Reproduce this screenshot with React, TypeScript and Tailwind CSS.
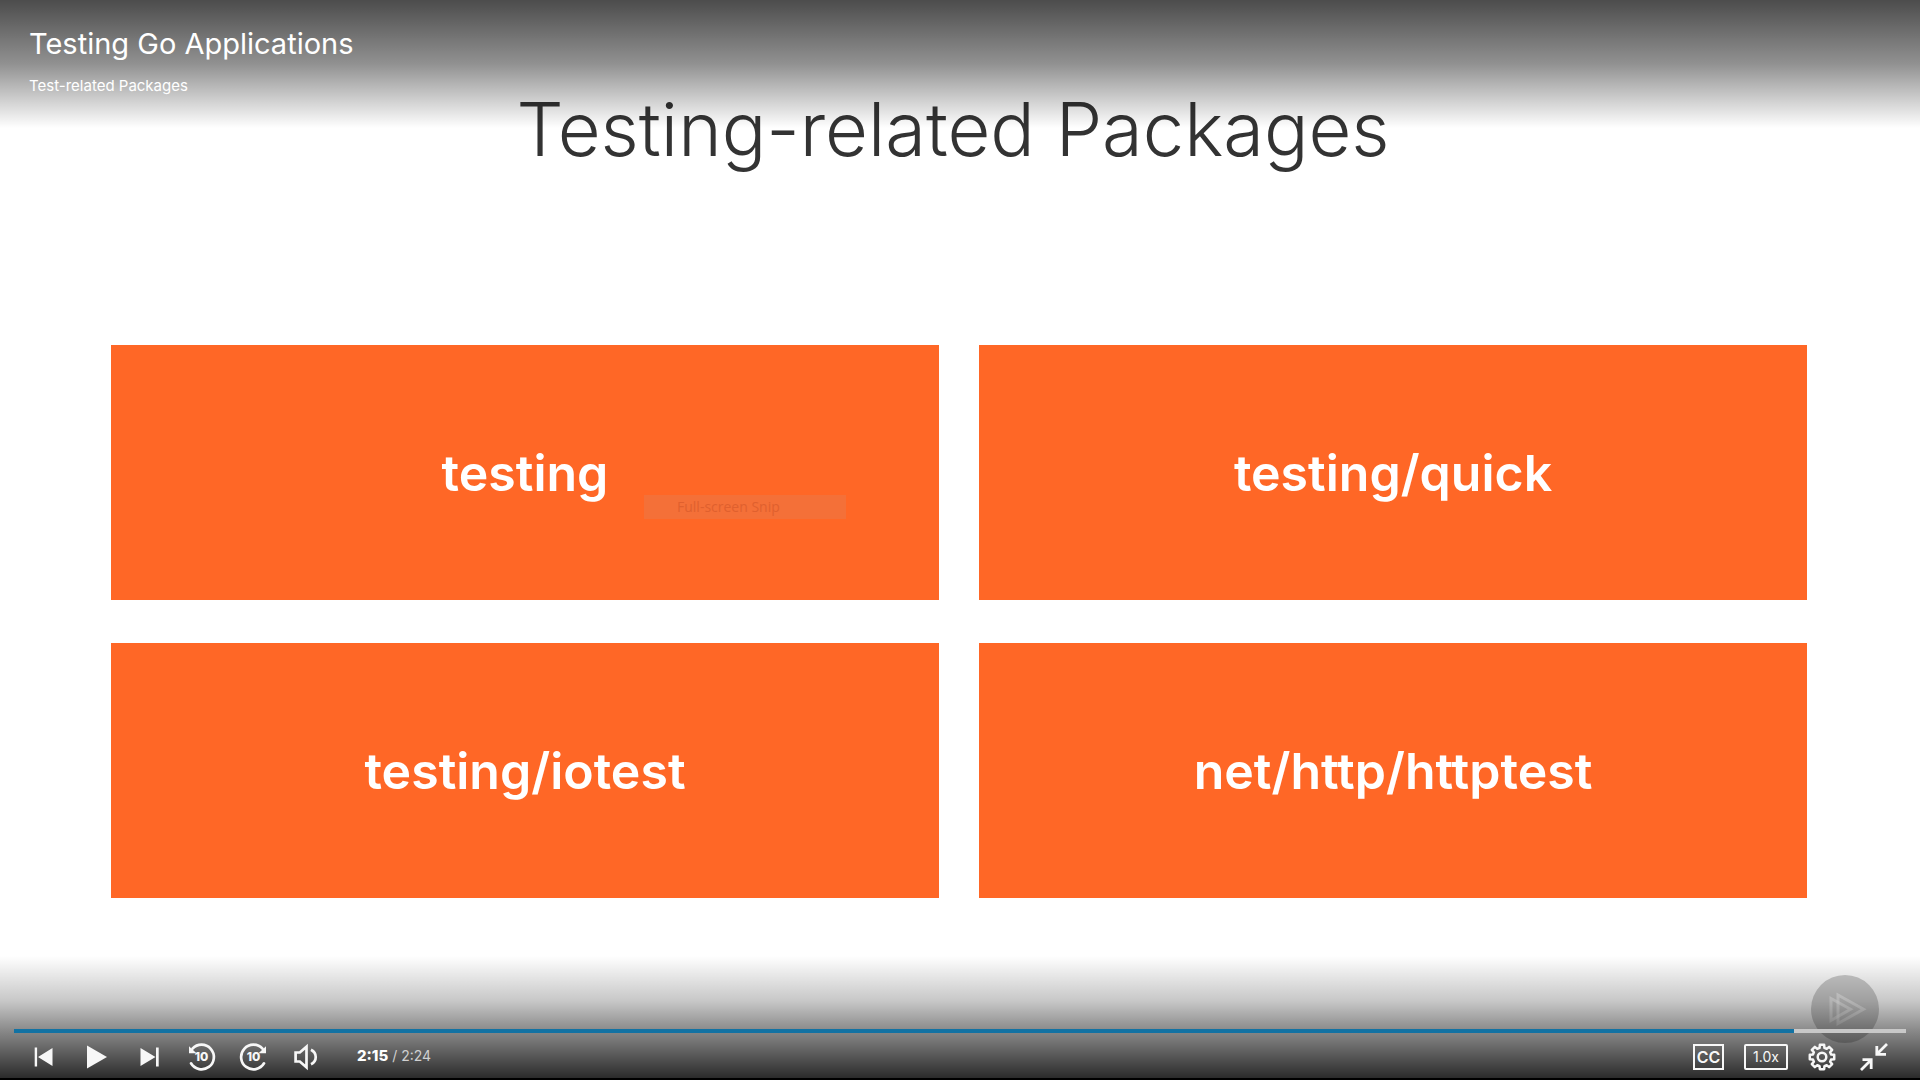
import React from 'react';

const packages = ['testing', 'testing/quick', 'testing/iotest', 'net/http/httptest'];

function ControlButton({ label, children }: { label: string; children: React.ReactNode }) {
  return (
    <button type="button" aria-label={label} className="flex h-8 w-[52px] items-center justify-center">
      {children}
    </button>
  );
}

function PreviousIcon() {
  return (
    <svg viewBox="0 0 28 28" className="size-7" fill="#f7f7f7" aria-hidden="true">
      <path d="M3.7 4.5h2.4v19H3.7zM7 14 21.5 5v18z" />
    </svg>
  );
}

function PlayIcon() {
  return (
    <svg viewBox="0 0 28 28" className="size-7" fill="#f7f7f7" aria-hidden="true">
      <path d="M4 2.5 24 14 4 25.5z" />
    </svg>
  );
}

function NextIcon() {
  return (
    <svg viewBox="0 0 28 28" className="size-7" fill="#f7f7f7" aria-hidden="true">
      <path d="M21 4.5h2.700v19H21zM5.500 5l15 9-15 9z" />
    </svg>
  );
}

function SkipIcon({ forward = false }: { forward?: boolean }) {
  return (
    <svg viewBox="0 0 28 28" className="size-7 overflow-visible" fill="none" aria-hidden="true">
      <g transform={forward ? 'matrix(-1 0 0 1 29 0)' : 'translate(0 0)'}>
        <path d="M4 20.300A12.300 12.300 0 1 0 5.500 5.700" stroke="#f7f7f7" strokeWidth="2.700" strokeLinecap="round" />
        <path d="M2 3.200v7h7.500z" fill="#f7f7f7" />
      </g>
      <text x="14.500" y="18.300" textAnchor="middle" fontFamily="Inter, sans-serif" fontSize="12" fontWeight="800" fill="#f7f7f7">
        10
      </text>
    </svg>
  );
}

function VolumeIcon() {
  return (
    <svg viewBox="0 0 28 28" className="size-7" fill="none" stroke="#f7f7f7" strokeWidth="2.7" aria-hidden="true">
      <path d="M4.600 9.500h4.200l6.700-5.800v20.600l-6.700-5.800H4.600z" />
      <path d="M20 6.700c6.300 3.200 6.300 11.400 0 14.600" />
    </svg>
  );
}

const gearPoints = Array.from({ length: 8 }, (_, tooth) =>
  [
    [-15, 9.4],
    [-10, 12.4],
    [10, 12.4],
    [15, 9.4],
  ].map(([offset, radius]) => {
    const angle = ((tooth * 45 + offset) * Math.PI) / 180;
    return `${14 + radius * Math.sin(angle)},${14 - radius * Math.cos(angle)}`;
  }),
)
  .flat()
  .join(' ');

function GearIcon() {
  return (
    <svg viewBox="0 0 28 28" className="size-7" fill="none" stroke="#f7f7f7" strokeWidth="2.5" strokeLinejoin="round" aria-hidden="true">
      <polygon points={gearPoints} />
      <circle cx="14" cy="14" r="4.3" />
    </svg>
  );
}

function CollapseIcon() {
  return (
    <svg viewBox="0 0 28 28" className="size-7" fill="none" stroke="#f7f7f7" strokeWidth="2.8" aria-hidden="true">
      <path d="M27 1 17.500 10.500M16.800 3v8.300H26M1 27l9.500-9.500M2.500 16.700h8.700V26" />
    </svg>
  );
}

function Watermark() {
  return (
    <svg viewBox="0 0 68 68" className="absolute right-[41px] bottom-[37px] size-[68px]" fill="none" aria-hidden="true">
      <circle cx="34" cy="34" r="34" fill="#000" fillOpacity=".2" />
      <g stroke="#fff" strokeOpacity=".5" strokeWidth="3">
        <path d="M27 20v28.500L52.500 34.300z" />
        <path d="M20 23.500v22L39.500 34.300z" />
      </g>
    </svg>
  );
}

export default function App() {
  return (
    <div className="relative min-h-screen overflow-hidden bg-white font-['Inter',sans-serif]">
      <main className="flex min-h-screen flex-col pr-[113px] pl-[111px]">
        <h2 className="pt-[85px] pr-3 text-center text-[74px] leading-[88px] font-light text-[#333]">Testing-related Packages</h2>
        <ul className="mt-[172px] grid grid-cols-2 gap-x-10 gap-y-[43px]">
          {packages.map((name) => (
            <li key={name} className="flex min-h-[255px] items-center justify-center bg-[#ff6726] text-[50px] leading-[52px] font-semibold text-white">
              {name}
            </li>
          ))}
        </ul>
        <Watermark />
      </main>

      <div className="absolute top-[495px] left-[644px] h-6 w-[202px] bg-[#f47038] pl-[33px] font-['Open_Sans',sans-serif] text-sm leading-6 text-[#e0602e]">
        Full-screen Snip
      </div>

      <header className="absolute inset-x-0 top-0 h-32 bg-[linear-gradient(to_bottom,rgb(0_0_0/.7)_0%,rgb(0_0_0/.43)_50%,rgb(0_0_0/.3)_65%,rgb(0_0_0/0)_100%)] px-[29px] pt-7 text-white">
        <h1 className="h-8 overflow-hidden text-[29px] leading-8">Testing Go Applications</h1>
        <p className="pt-4 text-[15px] leading-5">Test-related Packages</p>
      </header>

      <footer className="absolute inset-x-0 bottom-0 border-b-2 border-black bg-[linear-gradient(to_bottom,rgb(0_0_0/0)_0%,rgb(0_0_0/.22)_37%,rgb(0_0_0/.45)_60%,rgb(0_0_0/.83)_100%)] pt-[73px] text-[#f7f7f7]">
        <input
          type="range"
          aria-label="Playback position"
          min={0}
          max={144}
          defaultValue={135}
          className="mx-[14px] block h-1 w-[calc(100%-28px)] appearance-none bg-[linear-gradient(to_right,#1272a3_94.1%,#c8c8c8_94.1%)] [&::-webkit-slider-thumb]:size-0 [&::-webkit-slider-thumb]:appearance-none"
        />
        <div className="flex items-center justify-between pt-2 pr-7 pb-[5px] pl-[19px]">
          <div className="flex items-center">
            <ControlButton label="Previous clip"><PreviousIcon /></ControlButton>
            <ControlButton label="Play"><PlayIcon /></ControlButton>
            <ControlButton label="Next clip"><NextIcon /></ControlButton>
            <ControlButton label="Back 10 seconds"><SkipIcon /></ControlButton>
            <ControlButton label="Forward 10 seconds"><SkipIcon forward /></ControlButton>
            <ControlButton label="Volume"><VolumeIcon /></ControlButton>
            <div className="pb-0.5 pl-[26px] text-sm leading-5 text-[#d0d0d0]">
              <span className="text-[15px] font-extrabold text-white">2:15</span> / 2:24
            </div>
          </div>
          <div className="flex items-center gap-5">
            <button type="button" aria-label="Closed captions" className="flex h-[26px] w-[31px] items-center justify-center border-2 border-[#f7f7f7] text-base font-semibold">CC</button>
            <button type="button" aria-label="Playback speed" className="flex h-[26px] w-11 items-center justify-center rounded-xs border-2 border-[#f7f7f7] text-sm">1.0x</button>
            <button type="button" aria-label="Settings"><GearIcon /></button>
            <button type="button" aria-label="Exit full screen" className="flex w-9 justify-center"><CollapseIcon /></button>
          </div>
        </div>
      </footer>
    </div>
  );
}
